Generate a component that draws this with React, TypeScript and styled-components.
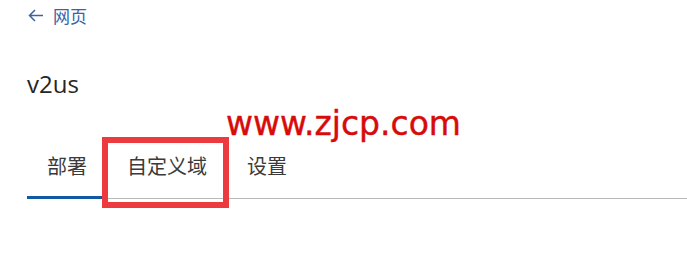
import React from "react";
import styled, { createGlobalStyle } from "styled-components";

const Global = createGlobalStyle`
  html, body { margin: 0; padding: 0; background: #ffffff; }
  body { font-family: "Open Sans", "Noto Sans CJK SC", sans-serif; }
`;

const Page = styled.div`
  position: relative;
  width: 687px;
  height: 255px;
  padding-left: 27px;
  box-sizing: border-box;
  overflow: hidden;
`;

const BackLink = styled.a`
  display: flex;
  align-items: center;
  gap: 9px;
  height: 30px;
  padding-left: 1px;
  color: #3b64a6;
  font-size: 17px;
  text-decoration: none;
  font-family: "Noto Sans CJK SC", sans-serif;
`;

const Title = styled.h1`
  margin: 38px 0 0;
  font-size: 24px;
  font-weight: 400;
  color: #262626;
  line-height: 32px;
`;

const TabBar = styled.div`
  display: flex;
  margin-top: 35px;
  border-bottom: 1px solid #b8b8b8;
`;

const Tab = styled.div<{ $active?: boolean }>`
  position: relative;
  padding: 0 20px;
  height: 64px;
  display: flex;
  align-items: center;
  font-family: "Noto Sans CJK SC", sans-serif;
  font-size: 20px;
  color: #3a3a3a;
  margin-bottom: -1px;
  border-bottom: 3px solid ${(p) => (p.$active ? "#0f5aa2" : "transparent")};
  box-sizing: border-box;
`;

const Highlight = styled.div`
  position: absolute;
  left: -5px;
  right: -2px;
  top: 2px;
  bottom: -12px;
  border: 6px solid #ec3a3e;
  pointer-events: none;
`;

const Watermark = styled.div`
  position: absolute;
  left: 226px;
  top: 104px;
  font-family: "DejaVu Sans", sans-serif;
  font-size: 33px;
  color: #d80b0b;
  -webkit-text-stroke: 0.4px #d80b0b;
`;

export default function App() {
  return (
    <>
      <Global />
      <Page>
        <BackLink href="#">
          <svg width="16" height="13" viewBox="0 0 16 13" fill="none">
            <path d="M15 6.5H1.5M7 1L1.5 6.5 7 12" stroke="#3b64a6" strokeWidth="1.5" />
          </svg>
          网页
        </BackLink>
        <Title>v2us</Title>
        <TabBar>
          <Tab $active>部署</Tab>
          <Tab>
            自定义域
            <Highlight />
          </Tab>
          <Tab>设置</Tab>
        </TabBar>
        <Watermark>www.zjcp.com</Watermark>
      </Page>
    </>
  );
}
